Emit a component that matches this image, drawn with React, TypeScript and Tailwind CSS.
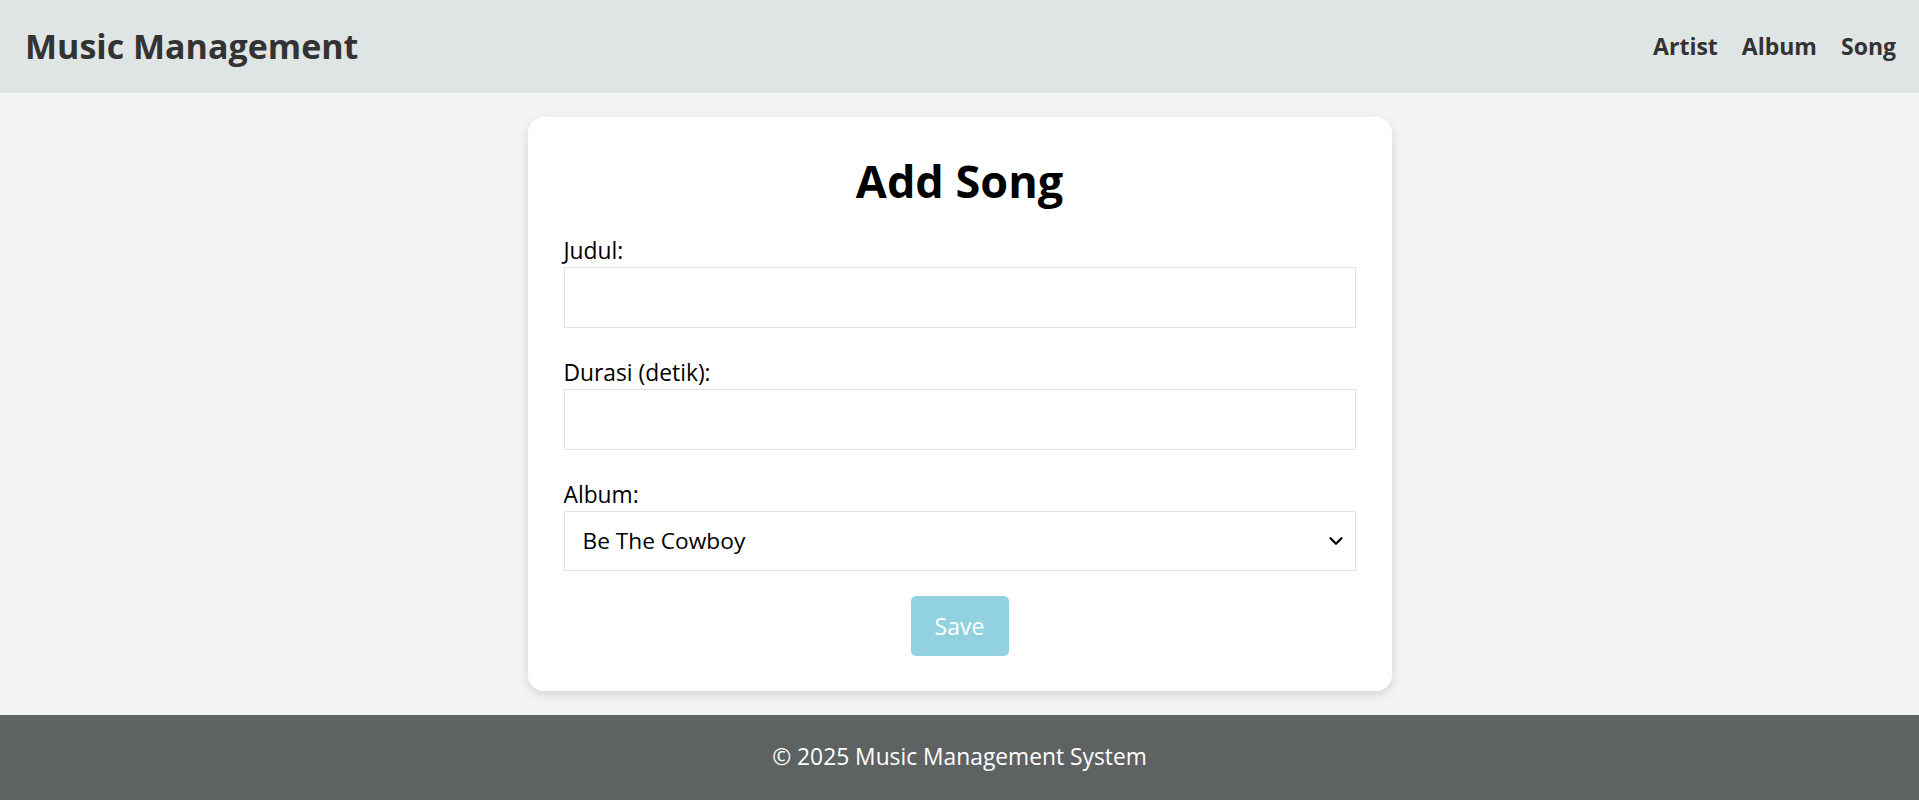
import { ChevronDown } from 'lucide-react';

const font = { fontFamily: '"Open Sans", "Noto Sans", sans-serif' };

function Field({ label, children }: { label: string; children: React.ReactNode }) {
  return (
    <div className="mb-[31px]">
      <label className="block text-[22.8px] leading-[27px] text-black mb-[3px]">{label}</label>
      {children}
    </div>
  );
}

export default function App() {
  return (
    <div className="min-h-screen flex flex-col bg-[#f2f3f5]" style={font}>
      <header className="h-[93px] bg-[#dfe4e5] flex items-center justify-between pl-[25px] pr-[23px]">
        <h1 className="text-[34px] font-bold text-[#333333]">Music Management</h1>
        <nav className="flex gap-[24px] text-[23px] font-bold text-[#333333]">
          <a href="#">Artist</a>
          <a href="#">Album</a>
          <a href="#">Song</a>
        </nav>
      </header>

      <main className="flex-1 pt-[24px] pb-[24px]">
        <div className="w-[864px] mx-auto bg-white rounded-[16px] shadow-[0_4px_10px_rgba(0,0,0,0.12)] px-[36px] pt-[37px] pb-[35px]">
          <h2 className="text-center text-[45px] font-bold text-black leading-[53px] mb-[30px]">Add Song</h2>
          <form onSubmit={(e) => e.preventDefault()}>
            <Field label="Judul:">
              <input type="text" className="block w-full h-[61px] border border-[#e3e3e3] px-[18px] text-[22px] outline-none" />
            </Field>
            <Field label="Durasi (detik):">
              <input type="number" className="block w-full h-[61px] border border-[#e3e3e3] px-[18px] text-[22px] outline-none" />
            </Field>
            <div className="mb-[25px]">
              <label className="block text-[22.8px] leading-[27px] text-black mb-[3px]">Album:</label>
              <div className="relative">
                <select className="block w-full h-[60px] border border-[#e3e3e3] pl-[18px] text-[22.7px] text-black bg-white appearance-none outline-none">
                  <option>Be The Cowboy</option>
                </select>
                <ChevronDown className="absolute right-[9px] top-[19px] w-[22px] h-[22px] text-black pointer-events-none" strokeWidth={2.5} />
              </div>
            </div>
            <div className="flex justify-center">
              <button type="submit" className="w-[98px] h-[60px] rounded-[5px] bg-[#92d2e0] text-white text-[23px]">Save</button>
            </div>
          </form>
        </div>
      </main>

      <footer className="h-[85px] bg-[#5f6263] flex items-center justify-center text-white text-[22.8px]">
        © 2025 Music Management System
      </footer>
    </div>
  );
}
